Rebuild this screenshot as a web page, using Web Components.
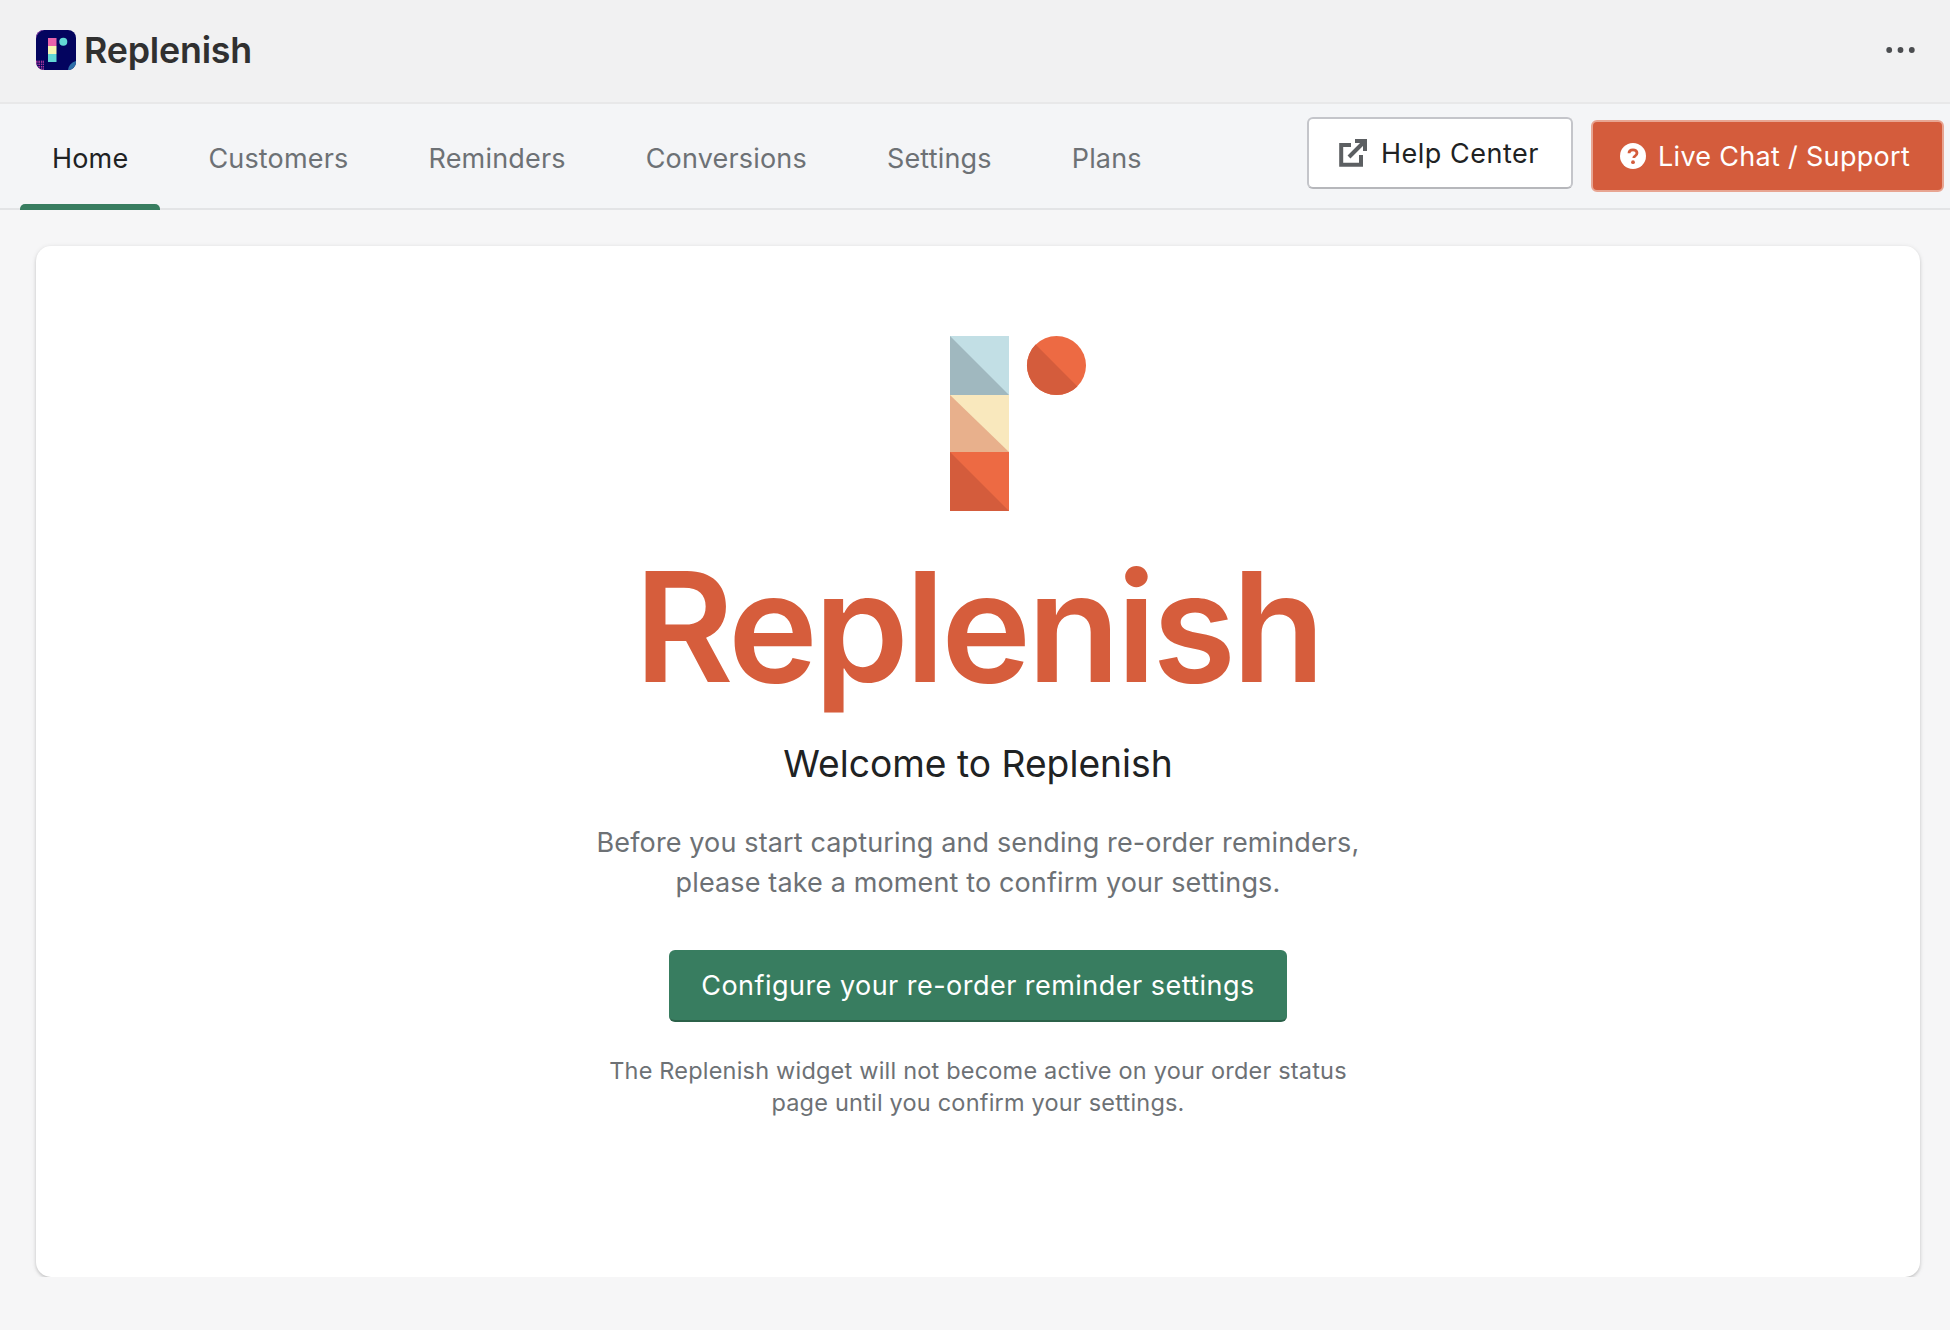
<!DOCTYPE html>
<html lang="en">
<head>
<meta charset="utf-8">
<title>Replenish</title>
<style>
  html, body { margin: 0; padding: 0; }
  body {
    background: #f6f6f7;
    font-family: Inter, "Liberation Sans", sans-serif;
    color: #202223;
  }
</style>
</head>
<body>
<app-header title-text="Replenish"></app-header>
<nav-bar>
  <nav-tab active>Home</nav-tab>
  <nav-tab>Customers</nav-tab>
  <nav-tab>Reminders</nav-tab>
  <nav-tab>Conversions</nav-tab>
  <nav-tab>Settings</nav-tab>
  <nav-tab>Plans</nav-tab>
  <help-button slot="actions"></help-button>
  <chat-button slot="actions"></chat-button>
</nav-bar>
<welcome-card>
  <span slot="heading">Welcome to Replenish</span>
  <span slot="intro">Before you start capturing and sending re-order reminders,<br>please take a moment to confirm your settings.</span>
  <span slot="action">Configure your re-order reminder settings</span>
  <span slot="note">The Replenish widget will not become active on your order status<br>page until you confirm your settings.</span>
</welcome-card>

<script>
class AppHeader extends HTMLElement {
  constructor() {
    super();
    this.shadowDOM = this.attachShadow({ mode: "open" });
    this.shadowDOM.innerHTML = `
      <style>
        :host {
          display: flex;
          align-items: center;
          height: 100px;
          padding: 0 35px 2px 36px;
          background: #f1f1f2;
          border-bottom: 2px solid #e8e8e9;
        }
        svg { display: block; flex: none; }
        .name {
          margin-left: 8px;
          font-size: 35.8px;
          font-weight: 600;
          letter-spacing: -0.2px;
          color: #303030;
        }
        .more { margin-left: auto; }
      </style>
      <svg width="40" height="40" viewBox="0 0 40 40">
        <defs>
          <clipPath id="r"><rect width="40" height="40" rx="8"/></clipPath>
          <pattern id="grid" width="2.4" height="2.4" patternUnits="userSpaceOnUse">
            <rect width="1.5" height="1.5" fill="#c33fa6"/>
          </pattern>
        </defs>
        <g clip-path="url(#r)">
          <rect width="40" height="40" fill="#03045f"/>
          <path d="M0 9 Q1 2 8 0 L4 0 Q0 1 0 4Z" fill="#8a3aa8"/>
          <rect x="0" y="30" width="8" height="10" fill="url(#grid)"/>
          <path d="M32 40 Q33 33 40 31 L40 40Z" fill="#2e6fa8"/>
          <rect x="12" y="8" width="8.5" height="8" fill="#e962ab"/>
          <rect x="12" y="16" width="8.5" height="8" fill="#f7f7b2"/>
          <rect x="12" y="24" width="8.5" height="8" fill="#62d8d6"/>
          <circle cx="27.3" cy="11.7" r="4" fill="#62d8d6"/>
        </g>
      </svg>
      <span class="name">${this.getAttribute("title-text")}</span>
      <svg class="more" width="29" height="8" viewBox="0 0 29 8" fill="#4b4d50">
        <circle cx="3.2" cy="4" r="2.9"/><circle cx="14.5" cy="4" r="2.9"/><circle cx="25.8" cy="4" r="2.9"/>
      </svg>
    `;
  }
}

class NavBar extends HTMLElement {
  constructor() {
    super();
    this.shadowDOM = this.attachShadow({ mode: "open" });
    this.shadowDOM.innerHTML = `
      <style>
        :host {
          display: flex;
          height: 104px;
          padding-left: 12px;
          background: #f4f5f7;
          border-bottom: 2px solid #e3e4e6;
        }
        .tabs { display: flex; flex: 1; }
        .actions {
          display: flex;
          align-items: flex-start;
          gap: 18px;
          padding: 13px 6px 0 0;
        }
      </style>
      <div class="tabs"><slot></slot></div>
      <div class="actions"><slot name="actions"></slot></div>
    `;
  }
}

class NavTab extends HTMLElement {
  constructor() {
    super();
    this.shadowDOM = this.attachShadow({ mode: "open" });
    this.shadowDOM.innerHTML = `
      <style>
        :host {
          display: flex;
          align-items: center;
          position: relative;
          box-sizing: border-box;
          padding: 5px 40px 0;
          height: 104px;
          font-size: 27px;
          letter-spacing: 0.18px;
          color: #6d7175;
        }
        :host([active]) { color: #202223; }
        :host([active])::after {
          content: "";
          position: absolute;
          left: 8px;
          right: 8px;
          bottom: -2px;
          height: 6px;
          background: #387d60;
          border-radius: 5px 5px 0 0;
        }
      </style>
      <slot></slot>
    `;
  }
}

class HelpButton extends HTMLElement {
  constructor() {
    super();
    this.shadowDOM = this.attachShadow({ mode: "open" });
    this.shadowDOM.innerHTML = `
      <style>
        :host {
          display: flex;
          align-items: center;
          box-sizing: border-box;
          width: 266px;
          height: 72px;
          padding-left: 30px;
          gap: 14px;
          background: #fff;
          border: 2px solid #c4c5ca;
          border-bottom-color: #b6b7bb;
          border-radius: 6px;
          font-size: 27px;
          letter-spacing: 0.5px;
          color: #202223;
        }
        svg { display: block; flex: none; }
      </style>
      <svg width="28" height="28" viewBox="0 0 28 28" fill="none" stroke="#5c5f62" stroke-width="4">
        <path d="M12 6H2.2V25.8H22V16"/>
        <path d="M10 18L25 3"/>
        <path d="M16 2H26V12"/>
      </svg>
      <span>Help Center</span>
    `;
  }
}

class ChatButton extends HTMLElement {
  constructor() {
    super();
    this.shadowDOM = this.attachShadow({ mode: "open" });
    this.shadowDOM.innerHTML = `
      <style>
        :host {
          display: flex;
          align-items: center;
          box-sizing: border-box;
          width: 353px;
          height: 72px;
          margin-top: 3px;
          padding-left: 27px;
          gap: 12px;
          background: #d45c3c;
          border: 2px solid #e8a592;
          border-radius: 6px;
          font-size: 27px;
          letter-spacing: 0.3px;
          color: #fff;
        }
        svg { display: block; flex: none; }
      </style>
      <svg width="26" height="26" viewBox="0 0 26 26">
        <circle cx="13" cy="13" r="13" fill="#fff"/>
        <path d="M9 10.2C9 8 10.8 6.8 13 6.8s4 1.3 4 3.3c0 1.7-1 2.4-2 3-.8.5-1.2.9-1.2 1.8" fill="none" stroke="#d45c3c" stroke-width="2.8"/>
        <circle cx="13" cy="19.2" r="1.9" fill="#d45c3c"/>
      </svg>
      <span>Live Chat / Support</span>
    `;
  }
}

class LogoMark extends HTMLElement {
  constructor() {
    super();
    this.shadowDOM = this.attachShadow({ mode: "open" });
    this.shadowDOM.innerHTML = `
      <style>
        :host { display: flex; flex-direction: column; align-items: center; }
        svg { display: block; margin-left: 80px; }
        .word {
          margin-top: 28px;
          height: 176px;
          line-height: 176px;
          font-size: 152px;
          font-weight: 600;
          letter-spacing: -3.8px;
          color: #d65d3c;
        }
      </style>
      <svg width="136" height="175" viewBox="0 0 136 175">
        <rect x="0" y="0" width="59" height="59" fill="#c2dfe5"/>
        <path d="M0 0L59 59H0Z" fill="#a0b8bf"/>
        <rect x="0" y="59" width="59" height="57" fill="#f9e8bd"/>
        <path d="M0 59L59 116H0Z" fill="#e8b08c"/>
        <rect x="0" y="116" width="59" height="59" fill="#ed6a43"/>
        <path d="M0 116L59 175H0Z" fill="#d45c3c"/>
        <circle cx="106.5" cy="29.5" r="29.5" fill="#ed6a43"/>
        <path d="M85.6 8.6L127.4 50.4A29.5 29.5 0 0 1 85.6 8.6Z" fill="#d45c3c"/>
      </svg>
      <div class="word">Replenish</div>
    `;
  }
}

class WelcomeCard extends HTMLElement {
  constructor() {
    super();
    this.shadowDOM = this.attachShadow({ mode: "open" });
    this.shadowDOM.innerHTML = `
      <style>
        :host {
          display: flex;
          flex-direction: column;
          align-items: center;
          box-sizing: border-box;
          height: 1031px;
          margin: 36px 30px 0 36px;
          padding-top: 90px;
          background: #fff;
          border-radius: 15px;
          box-shadow: 0 1px 5px rgba(23, 24, 24, 0.12), 0 2px 3px rgba(0, 0, 0, 0.12);
          text-align: center;
        }
        .heading {
          margin-top: 24px;
          font-size: 37.2px;
          line-height: 50px;
          color: #202223;
        }
        .intro {
          margin-top: 34px;
          font-size: 27px;
          line-height: 40px;
          letter-spacing: 0.13px;
          color: #6d7175;
        }
        .action {
          display: flex;
          align-items: center;
          justify-content: center;
          box-sizing: border-box;
          width: 618px;
          height: 72px;
          margin-top: 47px;
          padding-top: 1px;
          background: #387d60;
          border-bottom: 2px solid #2b6149;
          border-radius: 6px;
          font-size: 27px;
          letter-spacing: 0.47px;
          color: #fff;
        }
        .note {
          margin-top: 33px;
          font-size: 23.5px;
          line-height: 32px;
          letter-spacing: 0.2px;
          color: #6d7175;
        }
      </style>
      <logo-mark></logo-mark>
      <div class="heading"><slot name="heading"></slot></div>
      <div class="intro"><slot name="intro"></slot></div>
      <div class="action"><slot name="action"></slot></div>
      <div class="note"><slot name="note"></slot></div>
    `;
  }
}

customElements.define("app-header", AppHeader);
customElements.define("nav-bar", NavBar);
customElements.define("nav-tab", NavTab);
customElements.define("help-button", HelpButton);
customElements.define("chat-button", ChatButton);
customElements.define("logo-mark", LogoMark);
customElements.define("welcome-card", WelcomeCard);
</script>
</body>
</html>
